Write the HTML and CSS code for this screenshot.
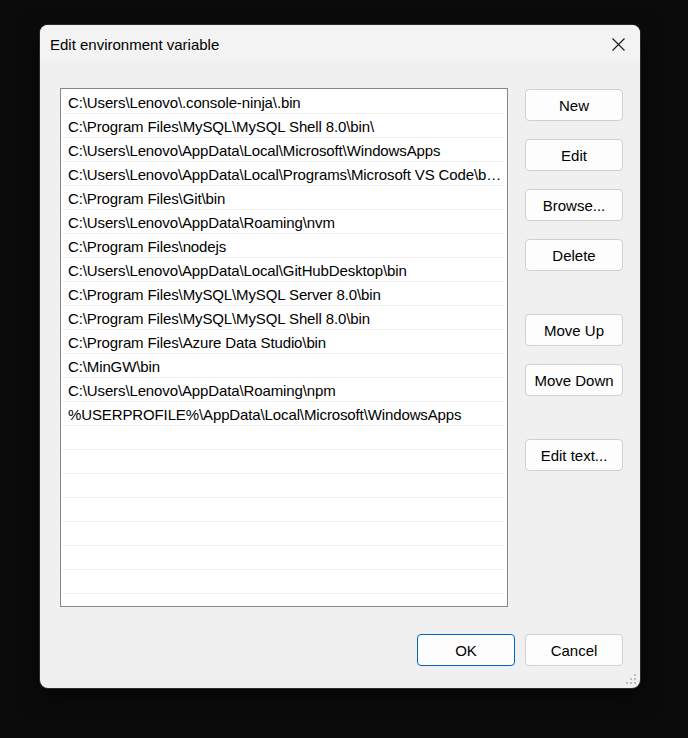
FILE: index.html
```html
<!DOCTYPE html>
<html>
<head>
<meta charset="utf-8">
<link rel="stylesheet" href="styles.css">
</head>
<body>
<div class="window">
  <div class="titlebar">
    <span class="title">Edit environment variable</span>
    <span class="close">
      <svg width="13" height="13" viewBox="0 0 13 13"><path d="M0.5 0.5 L12.5 12.5 M12.5 0.5 L0.5 12.5" stroke="#1a1a1a" stroke-width="1.1" fill="none"/></svg>
    </span>
  </div>
  <div class="content">
    <div class="main">
      <div class="list">
        <div class="row">C:\Users\Lenovo\.console-ninja\.bin</div>
        <div class="row">C:\Program Files\MySQL\MySQL Shell 8.0\bin\</div>
        <div class="row">C:\Users\Lenovo\AppData\Local\Microsoft\WindowsApps</div>
        <div class="row">C:\Users\Lenovo\AppData\Local\Programs\Microsoft VS Code\b…</div>
        <div class="row">C:\Program Files\Git\bin</div>
        <div class="row">C:\Users\Lenovo\AppData\Roaming\nvm</div>
        <div class="row">C:\Program Files\nodejs</div>
        <div class="row">C:\Users\Lenovo\AppData\Local\GitHubDesktop\bin</div>
        <div class="row">C:\Program Files\MySQL\MySQL Server 8.0\bin</div>
        <div class="row">C:\Program Files\MySQL\MySQL Shell 8.0\bin</div>
        <div class="row">C:\Program Files\Azure Data Studio\bin</div>
        <div class="row">C:\MinGW\bin</div>
        <div class="row">C:\Users\Lenovo\AppData\Roaming\npm</div>
        <div class="row">%USERPROFILE%\AppData\Local\Microsoft\WindowsApps</div>
        <div class="row"></div>
        <div class="row"></div>
        <div class="row"></div>
        <div class="row"></div>
        <div class="row"></div>
        <div class="row"></div>
        <div class="row"></div>
        <div class="row"></div>
      </div>
      <div class="side">
        <div class="group">
          <button class="btn">New</button>
          <button class="btn">Edit</button>
          <button class="btn">Browse...</button>
          <button class="btn">Delete</button>
        </div>
        <div class="group">
          <button class="btn">Move Up</button>
          <button class="btn">Move Down</button>
        </div>
        <div class="group">
          <button class="btn">Edit text...</button>
        </div>
      </div>
    </div>
    <div class="footer">
      <button class="btn primary">OK</button>
      <button class="btn">Cancel</button>
    </div>
  </div>
  <svg class="grip" width="12" height="12" viewBox="0 0 12 12">
    <rect x="8" y="0" width="2" height="2" fill="#bdbdbd"/>
    <rect x="4" y="4" width="2" height="2" fill="#bdbdbd"/>
    <rect x="8" y="4" width="2" height="2" fill="#bdbdbd"/>
    <rect x="0" y="8" width="2" height="2" fill="#bdbdbd"/>
    <rect x="4" y="8" width="2" height="2" fill="#bdbdbd"/>
    <rect x="8" y="8" width="2" height="2" fill="#bdbdbd"/>
  </svg>
</div>
</body>
</html>
```
FILE: styles.css
```css
html, body {
  margin: 0;
  padding: 0;
  background: #0b0b0b;
  height: 738px;
  overflow: hidden;
}
body {
  font-family: "Liberation Sans", Arial, sans-serif;
  font-size: 15px;
  color: #000;
}
.window {
  position: relative;
  margin: 25px 0 0 40px;
  width: 600px;
  height: 663px;
  background: #f0f0f0;
  border-radius: 8px;
  overflow: hidden;
  box-shadow: 0 0 0 1px #2a2a2a, 0 8px 24px rgba(0,0,0,0.6);
  display: flex;
  flex-direction: column;
}
.titlebar {
  height: 38px;
  background: #f3f3f3;
  display: flex;
  align-items: center;
  justify-content: space-between;
  padding: 0 15px 0 10px;
  flex-shrink: 0;
}
.title {
  font-size: 15px;
  color: #000;
}
.close {
  display: flex;
  align-items: center;
}
.content {
  flex: 1;
  display: flex;
  flex-direction: column;
  padding: 25px 17px 22px 20px;
}
.main {
  display: flex;
  gap: 17px;
}
.list {
  box-sizing: border-box;
  width: 448px;
  height: 519px;
  flex-shrink: 0;
  background: #fff;
  border: 1px solid #828790;
  overflow: hidden;
  padding: 1px 2px 0 1px;
}
.row {
  height: 23px;
  line-height: 25px;
  border-bottom: 1px solid #f0f0f0;
  padding: 0 1px 0 6px;
  white-space: nowrap;
  overflow: hidden;
  text-overflow: ellipsis;
  letter-spacing: -0.12px;
}
.side {
  display: flex;
  flex-direction: column;
  gap: 43px;
  padding-top: 1px;
}
.group {
  display: flex;
  flex-direction: column;
  gap: 18px;
}
.btn {
  width: 98px;
  height: 32px;
  background: #fdfdfd;
  border: 1px solid #d0d0d0;
  border-radius: 4px;
  font-family: "Liberation Sans", Arial, sans-serif;
  font-size: 15px;
  color: #000;
  padding: 0;
}
.primary {
  border: 1px solid #0067c0;
}
.footer {
  margin-top: auto;
  display: flex;
  justify-content: flex-end;
  gap: 10px;
}
.grip {
  position: absolute;
  right: 2px;
  bottom: 2px;
}
```
